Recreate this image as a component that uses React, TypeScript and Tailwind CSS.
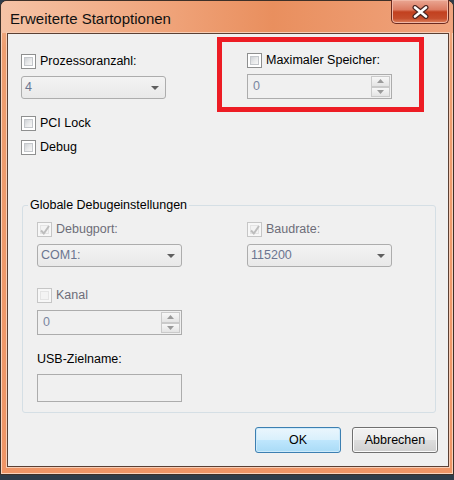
import type { ReactNode } from "react";

function Check({ checked, disabled }: { checked?: boolean; disabled?: boolean }) {
  return (
    <span
      className={`relative flex h-[15px] w-[15px] shrink-0 p-[2px] border ${
        disabled ? "border-[#c6c6c6] bg-[#f7f7f7]" : "border-[#8e8f8f] bg-white"
      }`}
    >
      <span
        className={`h-full w-full border ${
          disabled
            ? "border-[#e4e4e4] bg-[#f3f3f3]"
            : "border-[#c4c7cb] bg-[linear-gradient(135deg,#cfd2d6_0%,#e9eaeb_55%,#f7f7f7_100%)]"
        }`}
      />
      {checked && (
        <svg className="absolute left-[1px] top-[1px]" width="12" height="12" viewBox="0 0 12 12">
          <path d="M2 6.5 L4.8 9.5 L10 2" fill="none" stroke="#bdbdbd" strokeWidth="2" />
        </svg>
      )}
    </span>
  );
}

function CheckRow({ label, checked, disabled }: { label: string; checked?: boolean; disabled?: boolean }) {
  return (
    <div className="flex h-[15px] items-center gap-[4px]">
      <Check checked={checked} disabled={disabled} />
      <span className={disabled ? "text-[#6d6d78]" : "text-black"}>{label}</span>
    </div>
  );
}

function Combo({ value, className = "" }: { value: string; className?: string }) {
  return (
    <div
      className={`flex h-[23px] w-[145px] items-center justify-between rounded-[3px] border border-[#adadad] bg-[linear-gradient(180deg,#f3f3f3,#e9e9e9)] pl-[3px] pr-[6px] text-[#6b7590] ${className}`}
    >
      <span>{value}</span>
      <svg width="8" height="4" viewBox="0 0 8 4">
        <path d="M0 0H8L4 4Z" fill="#5f5f5f" />
      </svg>
    </div>
  );
}

function SpinBtn({ up }: { up?: boolean }) {
  return (
    <div className="flex flex-1 items-center justify-center border border-[#cacaca] bg-[linear-gradient(180deg,#f7f7f7,#e4e4e4)]">
      <svg width="7" height="4" viewBox="0 0 7 4">
        <path d={up ? "M0 4H7L3.5 0Z" : "M0 0H7L3.5 4Z"} fill="#9a9a9a" />
      </svg>
    </div>
  );
}

function Spin({ value, className = "" }: { value: string; className?: string }) {
  return (
    <div className={`flex h-[25px] w-[145px] border border-[#acacac] bg-[#f0f0f0] p-[1px] ${className}`}>
      <span className="flex-1 pl-[4px] leading-[21px] text-[#7a86a0]">{value}</span>
      <div className="flex w-[19px] flex-col">
        <SpinBtn up />
        <SpinBtn />
      </div>
    </div>
  );
}

function Button({ children, primary }: { children: ReactNode; primary?: boolean }) {
  return (
    <button
      className={`h-[26px] w-[86px] rounded-[3px] border text-black ${
        primary
          ? "border-[#3c7fb1] bg-[linear-gradient(180deg,#eaf6fd_0%,#d9f0fc_48%,#bee6fd_52%,#a9dbf6_100%)] shadow-[inset_0_0_0_1px_#cdeafb]"
          : "border-[#707070] bg-[linear-gradient(180deg,#f2f2f2_0%,#ebebeb_48%,#dddddd_52%,#cfcfcf_100%)] shadow-[inset_0_0_0_1px_#fbfbfb]"
      }`}
    >
      {children}
    </button>
  );
}

export default function App() {
  return (
    <div className="flex h-[480px] w-[454px] flex-col bg-[#2e3c4a] font-['Liberation_Sans',Arial,sans-serif] text-[12.5px] leading-[15px] text-black">
      <div className="flex h-[475px] shrink-0 flex-col rounded-t-[7px] border border-[#3e3028] bg-[linear-gradient(180deg,#f3b592_0%,#ee9e70_10%,#ef9566_100%)] shadow-[inset_0_0_0_1px_#f8d2bc]">
        <div className="flex h-[32px] shrink-0 items-start justify-between rounded-t-[6px] bg-[linear-gradient(90deg,#f5c3a6_0%,#f0a57c_35%,#e98f5e_60%,#f0a47e_100%)]">
          <span className="ml-[9px] mt-[9px] text-[15px] leading-[17px] text-[#111]">Erweiterte Startoptionen</span>
          <div className="-mt-px mr-[4px] flex h-[24px] w-[58px] items-center justify-center rounded-b-[5px] border border-t-0 border-[#6b2a1f] bg-[linear-gradient(180deg,#eaa793_0%,#dc7b62_42%,#c2401f_52%,#c64d2c_80%,#df8560_100%)] shadow-[inset_0_0_0_1px_#f1b7a5]">
            <svg width="17" height="14" viewBox="0 0 17 14">
              <path d="M3 2.5L14 11.5M14 2.5L3 11.5" stroke="#4a2622" strokeWidth="5" strokeLinecap="round" />
              <path d="M3 2.5L14 11.5M14 2.5L3 11.5" stroke="#ffffff" strokeWidth="2.6" strokeLinecap="round" />
            </svg>
          </div>
        </div>

        <div className="mb-[7px] ml-[6px] mr-[4px] flex flex-1 flex-col border border-[#5b4034] bg-[#f0f0f0] shadow-[0_0_0_1px_#f7cdb5]">
          <div className="flex items-start">
            <div className="ml-[13px] mt-[20px] flex w-[196px] flex-col">
              <CheckRow label="Prozessoranzahl:" />
              <Combo value="4" className="mt-[7px] w-[144px]" />
              <div className="mt-[17px]">
                <CheckRow label="PCI Lock" />
              </div>
              <div className="mt-[9px]">
                <CheckRow label="Debug" />
              </div>
            </div>
            <div className="mt-[3px] h-[75px] w-[207px] border-[5px] border-[#ed1c24] pl-[25px] pt-[11px]">
              <CheckRow label="Maximaler Speicher:" />
              <Spin value="0" className="mt-[6px]" />
            </div>
          </div>

          <fieldset className="ml-[14px] mt-[43px] w-[414px] rounded-[3px] border border-[#d5dfe5]">
            <legend className="ml-[5px] px-[2px] text-black">Globale Debugeinstellungen</legend>
            <div className="grid grid-cols-[210px_1fr] pb-[10px] pl-[14px] pt-[9px]">
              <div className="flex flex-col">
                <CheckRow label="Debugport:" checked disabled />
                <Combo value="COM1:" className="mt-[7px]" />
                <div className="mt-[21px]">
                  <CheckRow label="Kanal" disabled />
                </div>
                <Spin value="0" className="mt-[7px]" />
                <span className="mt-[17px] text-black">USB-Zielname:</span>
                <div className="mt-[7px] h-[28px] w-[145px] border border-[#acacac] bg-[#f0f0f0]" />
              </div>
              <div className="flex flex-col">
                <CheckRow label="Baudrate:" checked disabled />
                <Combo value="115200" className="mt-[7px] w-[144px]" />
              </div>
            </div>
          </fieldset>

          <div className="mt-[14px] flex justify-end gap-[11px] pr-[10px]">
            <Button primary>OK</Button>
            <Button>Abbrechen</Button>
          </div>
        </div>
      </div>
    </div>
  );
}
